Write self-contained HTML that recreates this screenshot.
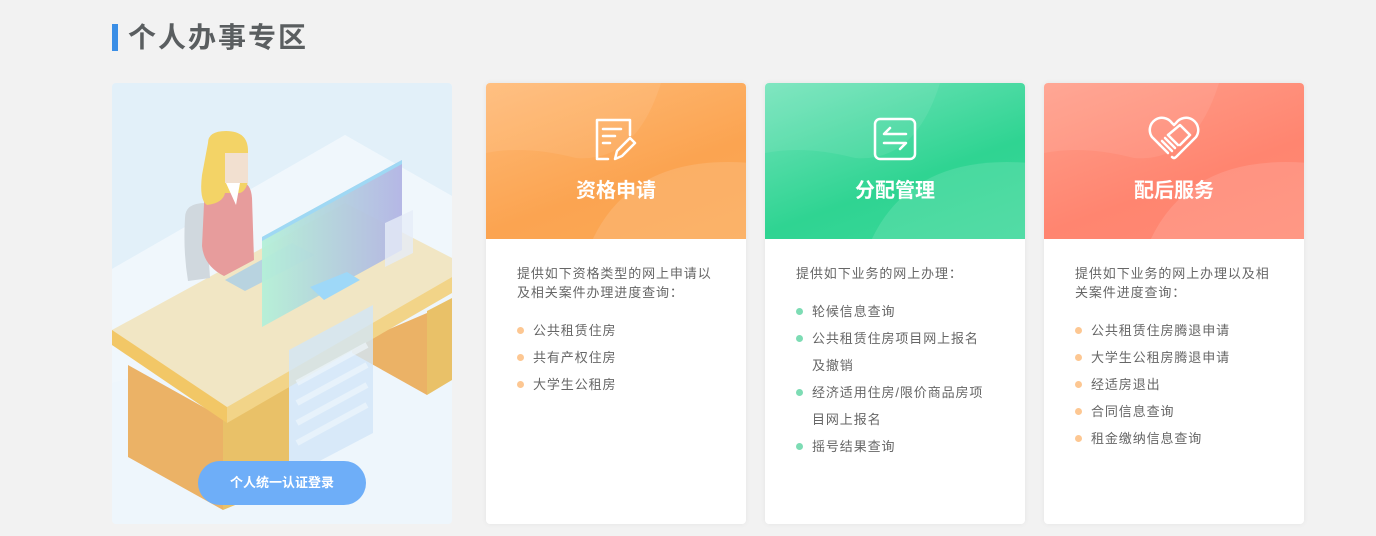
<!DOCTYPE html>
<html><head><meta charset="utf-8"><style>
body{margin:0;width:1376px;height:536px;background:#f2f2f2;font-family:"Liberation Sans","Noto Sans CJK SC",sans-serif;position:relative;overflow:hidden}
.bar{position:absolute;left:112px;top:24px;width:6px;height:27px;background:#3a8ee6}
.title{position:absolute;left:128px;top:18px;font-size:28px;font-weight:bold;color:#5a5e60;line-height:40px;letter-spacing:2px}
.ill{position:absolute;left:112px;top:83px;width:340px;height:441px;border-radius:4px;overflow:hidden;background:#eef6fc}
.btn{position:absolute;left:86px;top:378px;width:168px;height:44px;border-radius:22px;background:#6eaef8;color:#fff;font-size:13px;font-weight:bold;text-align:center;line-height:44px}
.card{position:absolute;top:83px;width:260px;height:441px;background:#fff;border-radius:4px;overflow:hidden;box-shadow:0 0 6px rgba(0,0,0,.06)}
.hd{position:relative;height:156px;overflow:hidden}
.hd h3{position:absolute;top:93px;left:0;right:0;margin:0;text-align:center;color:#fff;font-size:20px;line-height:30px;font-weight:bold}
.hd svg.ic{position:absolute;left:108px;top:34px}
.bd{padding:25px 10px 0 31px;font-size:13px;color:#666;white-space:nowrap;letter-spacing:0.9px}
.bd p{margin:0;line-height:19px}
.bd ul{list-style:none;margin:15px 0 0;padding:0}
.bd li{position:relative;padding-left:16px;line-height:27px}
.bd li:before{content:"";position:absolute;left:0;top:10px;width:7px;height:7px;border-radius:50%;background:var(--c)}
</style></head><body>
<div class="bar"></div><div class="title">个人办事专区</div>
<div class="ill">
<svg width="340" height="441" viewBox="0 0 340 441">
<rect width="340" height="441" fill="#eef6fc"/>
<polygon points="0,0 340,0 340,113 233,52 0,186" fill="#e2f0f9"/>
<polygon points="0,186 233,52 340,113 340,200 0,300" fill="#f0f7fc"/>
<polygon points="16,282 111,335 111,427 16,374" fill="#ebb266"/>
<polygon points="111,335 177,304 177,400 111,427" fill="#e9c168"/>
<polygon points="240,262 315,230 315,312 240,270" fill="#ebb266"/>
<polygon points="315,228 340,215 340,297 315,312" fill="#e9c168"/>
<polygon points="0,247 233,120 340,175 340,194 115,324 0,262" fill="#f1e6c4"/>
<polygon points="0,247 0,262 115,340 115,324" fill="#f2c766"/>
<polygon points="115,324 340,194 340,210 115,340" fill="#f2d488"/>
<path d="M73,135 q0,-15 20,-15 l5,75 l-22,3 q-5,-30 -3,-63z" fill="#d0d8de"/>
<path d="M93,100 q15,-5 40,0 q6,3 7,15 l2,62 l-30,16 q-20,-10 -22,-30 z" fill="#e79c9c"/>
<path d="M96,60 q0,-12 18,-12 q22,0 22,20 l0,30 q-2,10 -8,12 l-15,0 q-2,10 -18,12 q-8,-5 -5,-30 z" fill="#f3d366"/>
<rect x="113" y="70" width="23" height="30" fill="#f2e0d0"/>
<polygon points="114,100 128,100 124,122" fill="#fff"/>
<polygon points="113,197 180,160 203,172 133,208" fill="#b8d3e0"/>
<defs><linearGradient id="g" x1="0" x2="1"><stop offset="0" stop-color="#b4f0d8"/><stop offset="1" stop-color="#b2b4e4"/></linearGradient></defs>
<polygon points="150,154 290,77 290,167 150,244" fill="url(#g)" opacity=".95"/>
<polygon points="150,154 290,77 290,81 150,158" fill="#9fd8f4"/>
<polygon points="198,204 235,189 248,197 212,217" fill="#9ed8f8"/>
<polygon points="177,267 261,222 261,350 177,394" fill="#d2e6f8" opacity=".8"/>
<path d="M185,300 l70,-38 M185,320 l70,-38 M185,340 l70,-38 M185,360 l70,-38" stroke="#eef6fc" stroke-width="6" opacity=".7"/>
<polygon points="273,140 301,127 301,170 273,184" fill="#e6ecf8" opacity=".8"/>
</svg>
<div class="btn">个人统一认证登录</div>
</div>

<div class="card" style="left:486px">
<div class="hd" style="background:linear-gradient(160deg,#ffbb78,#fba451 60%,#fba955)">
<svg width="340" height="156" style="position:absolute;left:0;top:0"><path d="M0,70 q40,-8 90,5 q60,5 85,-75 l90,0 l0,0 l-265,0z" fill="#fff" opacity=".08"/><path d="M105,160 q40,-90 160,-80 l0,80z" fill="#fff" opacity=".12"/></svg>
<svg class="ic" width="44" height="44" viewBox="0 0 44 44" fill="none" stroke="#fff" stroke-width="2.5" stroke-linecap="round" stroke-linejoin="round"><path d="M14,42 H3 V3 H36 V18"/><path d="M9,12 H27 M9,19 H21 M9,26 H16"/><path d="M21,42 l2,-8 l13,-13 l5,5 l-13,13 z"/></svg>
<h3>资格申请</h3></div>
<div class="bd" style="--c:#fdc792"><p>提供如下资格类型的网上申请以<br>及相关案件办理进度查询：</p>
<ul><li>公共租赁住房</li><li>共有产权住房</li><li>大学生公租房</li></ul></div></div>

<div class="card" style="left:765px">
<div class="hd" style="background:linear-gradient(160deg,#76e4bc,#2fd492 60%,#3cd89a)">
<svg width="340" height="156" style="position:absolute;left:0;top:0"><path d="M0,70 q40,-8 90,5 q60,5 85,-75 l90,0 l0,0 l-265,0z" fill="#fff" opacity=".08"/><path d="M105,160 q40,-90 160,-80 l0,80z" fill="#fff" opacity=".12"/></svg>
<svg class="ic" width="44" height="44" viewBox="0 0 44 44" fill="none" stroke="#fff" stroke-width="2.5" stroke-linecap="round" stroke-linejoin="round"><rect x="2" y="2" width="40" height="40" rx="5"/><path d="M33,17 H11 l6,-6"/><path d="M11,26 H33 l-6,6"/></svg>
<h3>分配管理</h3></div>
<div class="bd" style="--c:#7ddcb4"><p>提供如下业务的网上办理：</p>
<ul><li>轮候信息查询</li><li>公共租赁住房项目网上报名<br>及撤销</li><li>经济适用住房/限价商品房项<br>目网上报名</li><li>摇号结果查询</li></ul></div></div>

<div class="card" style="left:1044px">
<div class="hd" style="background:linear-gradient(160deg,#ffa08c,#ff8570 60%,#ff8a74)">
<svg width="340" height="156" style="position:absolute;left:0;top:0"><path d="M0,70 q40,-8 90,5 q60,5 85,-75 l90,0 l0,0 l-265,0z" fill="#fff" opacity=".08"/><path d="M105,160 q40,-90 160,-80 l0,80z" fill="#fff" opacity=".12"/></svg>
<svg class="ic" width="56" height="48" viewBox="0 0 56 48" fill="none" stroke="#fff" stroke-width="2.5" stroke-linecap="round" stroke-linejoin="round" style="left:102px;top:32px"><path d="M14,30 L6,22 A12,12 0 0 1 26,8 L28,10 L30,8 A12,12 0 0 1 50,22 L30,42 Q28,44 26,42"/><path d="M22,20 L34,10 L44,20 L34,30"/><path d="M16,26 L26,36 M19,23 L29,33 M22,20 L32,30 M13,29 L22,38"/></svg>
<h3>配后服务</h3></div>
<div class="bd" style="--c:#fdc792"><p>提供如下业务的网上办理以及相<br>关案件进度查询：</p>
<ul><li>公共租赁住房腾退申请</li><li>大学生公租房腾退申请</li><li>经适房退出</li><li>合同信息查询</li><li>租金缴纳信息查询</li></ul></div></div>
</body></html>
